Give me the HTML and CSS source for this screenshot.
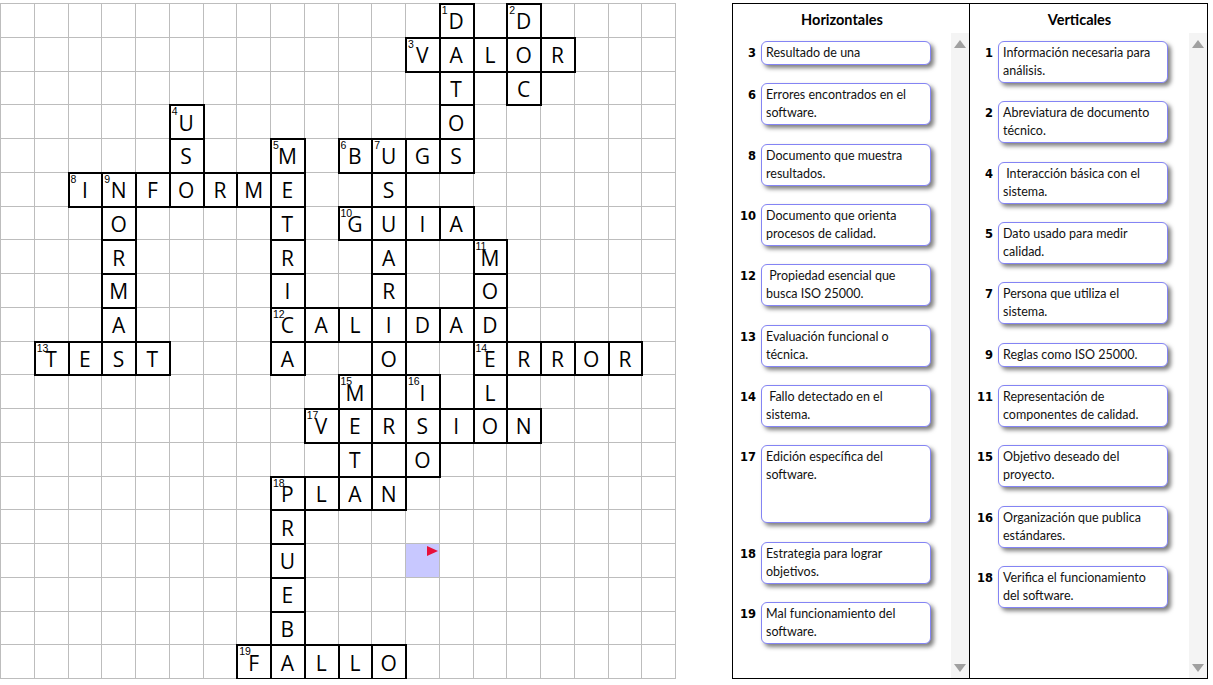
FILE: index.html
```html
<!DOCTYPE html>
<html lang="es">
<head>
<meta charset="utf-8">
<title>Crucigrama</title>
<link rel="stylesheet" href="styles.css">
</head>
<body>
<div class="page">
  <div class="cw">
    <i></i><i></i><i></i><i></i><i></i><i></i><i></i><i></i><i></i><i></i><i></i><i></i><i></i><b><sup>1</sup>D</b><i></i><b><sup>2</sup>D</b><i></i><i></i><i></i><i></i>
    <i></i><i></i><i></i><i></i><i></i><i></i><i></i><i></i><i></i><i></i><i></i><i></i><b><sup>3</sup>V</b><b>A</b><b>L</b><b>O</b><b>R</b><i></i><i></i><i></i>
    <i></i><i></i><i></i><i></i><i></i><i></i><i></i><i></i><i></i><i></i><i></i><i></i><i></i><b>T</b><i></i><b>C</b><i></i><i></i><i></i><i></i>
    <i></i><i></i><i></i><i></i><i></i><b><sup>4</sup>U</b><i></i><i></i><i></i><i></i><i></i><i></i><i></i><b>O</b><i></i><i></i><i></i><i></i><i></i><i></i>
    <i></i><i></i><i></i><i></i><i></i><b>S</b><i></i><i></i><b><sup>5</sup>M</b><i></i><b><sup>6</sup>B</b><b><sup>7</sup>U</b><b>G</b><b>S</b><i></i><i></i><i></i><i></i><i></i><i></i>
    <i></i><i></i><b><sup>8</sup>I</b><b><sup>9</sup>N</b><b>F</b><b>O</b><b>R</b><b>M</b><b>E</b><i></i><i></i><b>S</b><i></i><i></i><i></i><i></i><i></i><i></i><i></i><i></i>
    <i></i><i></i><i></i><b>O</b><i></i><i></i><i></i><i></i><b>T</b><i></i><b><sup>10</sup>G</b><b>U</b><b>I</b><b>A</b><i></i><i></i><i></i><i></i><i></i><i></i>
    <i></i><i></i><i></i><b>R</b><i></i><i></i><i></i><i></i><b>R</b><i></i><i></i><b>A</b><i></i><i></i><b><sup>11</sup>M</b><i></i><i></i><i></i><i></i><i></i>
    <i></i><i></i><i></i><b>M</b><i></i><i></i><i></i><i></i><b>I</b><i></i><i></i><b>R</b><i></i><i></i><b>O</b><i></i><i></i><i></i><i></i><i></i>
    <i></i><i></i><i></i><b>A</b><i></i><i></i><i></i><i></i><b><sup>12</sup>C</b><b>A</b><b>L</b><b>I</b><b>D</b><b>A</b><b>D</b><i></i><i></i><i></i><i></i><i></i>
    <i></i><b><sup>13</sup>T</b><b>E</b><b>S</b><b>T</b><i></i><i></i><i></i><b>A</b><i></i><i></i><b>O</b><i></i><i></i><b><sup>14</sup>E</b><b>R</b><b>R</b><b>O</b><b>R</b><i></i>
    <i></i><i></i><i></i><i></i><i></i><i></i><i></i><i></i><i></i><i></i><b><sup>15</sup>M</b><i></i><b><sup>16</sup>I</b><i></i><b>L</b><i></i><i></i><i></i><i></i><i></i>
    <i></i><i></i><i></i><i></i><i></i><i></i><i></i><i></i><i></i><b><sup>17</sup>V</b><b>E</b><b>R</b><b>S</b><b>I</b><b>O</b><b>N</b><i></i><i></i><i></i><i></i>
    <i></i><i></i><i></i><i></i><i></i><i></i><i></i><i></i><i></i><i></i><b>T</b><i></i><b>O</b><i></i><i></i><i></i><i></i><i></i><i></i><i></i>
    <i></i><i></i><i></i><i></i><i></i><i></i><i></i><i></i><b><sup>18</sup>P</b><b>L</b><b>A</b><b>N</b><i></i><i></i><i></i><i></i><i></i><i></i><i></i><i></i>
    <i></i><i></i><i></i><i></i><i></i><i></i><i></i><i></i><b>R</b><i></i><i></i><i></i><i></i><i></i><i></i><i></i><i></i><i></i><i></i><i></i>
    <i></i><i></i><i></i><i></i><i></i><i></i><i></i><i></i><b>U</b><i></i><i></i><i></i><i class="cur"></i><i></i><i></i><i></i><i></i><i></i><i></i><i></i>
    <i></i><i></i><i></i><i></i><i></i><i></i><i></i><i></i><b>E</b><i></i><i></i><i></i><i></i><i></i><i></i><i></i><i></i><i></i><i></i><i></i>
    <i></i><i></i><i></i><i></i><i></i><i></i><i></i><i></i><b>B</b><i></i><i></i><i></i><i></i><i></i><i></i><i></i><i></i><i></i><i></i><i></i>
    <i></i><i></i><i></i><i></i><i></i><i></i><i></i><b><sup>19</sup>F</b><b>A</b><b>L</b><b>L</b><b>O</b><i></i><i></i><i></i><i></i><i></i><i></i><i></i><i></i>
  </div>

  <div class="panel">
    <section class="col col-h">
      <h2 class="head">Horizontales</h2>
      <div class="body">
        <ul class="list">
          <li class="clue"><span class="num">3</span><div class="card">Resultado de una</div></li>
          <li class="clue"><span class="num">6</span><div class="card">Errores encontrados en el<br>software.</div></li>
          <li class="clue"><span class="num">8</span><div class="card">Documento que muestra<br>resultados.</div></li>
          <li class="clue"><span class="num">10</span><div class="card">Documento que orienta<br>procesos de calidad.</div></li>
          <li class="clue"><span class="num">12</span><div class="card">&nbsp;Propiedad esencial que<br>busca ISO 25000.</div></li>
          <li class="clue"><span class="num">13</span><div class="card">Evaluación funcional o<br>técnica.</div></li>
          <li class="clue"><span class="num">14</span><div class="card">&nbsp;Fallo detectado en el<br>sistema.</div></li>
          <li class="clue"><span class="num">17</span><div class="card tall">Edición específica del<br>software.</div></li>
          <li class="clue"><span class="num">18</span><div class="card">Estrategia para lograr<br>objetivos.</div></li>
          <li class="clue"><span class="num">19</span><div class="card">Mal funcionamiento del<br>software.</div></li>
        </ul>
        <div class="scroll"><span class="arr up"></span><span class="arr dn"></span></div>
      </div>
    </section>
    <section class="col col-v">
      <h2 class="head">Verticales</h2>
      <div class="body">
        <ul class="list">
          <li class="clue"><span class="num">1</span><div class="card">Información necesaria para<br>análisis.</div></li>
          <li class="clue"><span class="num">2</span><div class="card">Abreviatura de documento<br>técnico.</div></li>
          <li class="clue"><span class="num">4</span><div class="card">&nbsp;Interacción básica con el<br>sistema.</div></li>
          <li class="clue"><span class="num">5</span><div class="card">Dato usado para medir<br>calidad.</div></li>
          <li class="clue"><span class="num">7</span><div class="card">Persona que utiliza el<br>sistema.</div></li>
          <li class="clue"><span class="num">9</span><div class="card">Reglas como ISO 25000.</div></li>
          <li class="clue"><span class="num">11</span><div class="card">Representación de<br>componentes de calidad.</div></li>
          <li class="clue"><span class="num">15</span><div class="card">Objetivo deseado del<br>proyecto.</div></li>
          <li class="clue"><span class="num">16</span><div class="card">Organización que publica<br>estándares.</div></li>
          <li class="clue"><span class="num">18</span><div class="card">Verifica el funcionamiento<br>del software.</div></li>
        </ul>
        <div class="scroll"><span class="arr up"></span><span class="arr dn"></span></div>
      </div>
    </section>
  </div>
</div>
</body>
</html>
```

FILE: styles.css
```css
* { box-sizing: border-box; }

body {
  margin: 0;
  background: #fff;
  font-family: "Lato", "Liberation Sans", sans-serif;
  color: #000;
}

.page {
  display: flex;
  align-items: flex-start;
  padding-top: 3px;
}

/* ---------- crossword grid ---------- */
.cw {
  flex: none;
  display: grid;
  grid-template-columns: repeat(20, 33.75px);
  grid-auto-rows: 33.75px;
  border-top: 1px solid #bdbdbd;
  border-left: 1px solid #bdbdbd;
}

.cw i,
.cw b {
  display: block;
  border-right: 1px solid #bdbdbd;
  border-bottom: 1px solid #bdbdbd;
}

.cw b {
  position: relative;
  display: flex;
  align-items: center;
  justify-content: center;
  padding-top: 2px;
  font: 400 21px "Open Sans", "DejaVu Sans", sans-serif;
  color: #000;
  background: #fff;
  outline: 2px solid #000;
  outline-offset: -1px;
}

.cw sup {
  position: absolute;
  top: 1px;
  left: 2px;
  font: 400 10.5px/1 "Liberation Sans", sans-serif;
  color: #000;
}

.cw .cur {
  position: relative;
  background: #c8c8ff;
}

.cw .cur::after {
  content: "";
  position: absolute;
  top: 2px;
  right: 1px;
  border-left: 11px solid #e8103a;
  border-top: 5.5px solid transparent;
  border-bottom: 5.5px solid transparent;
}

/* ---------- clue panel ---------- */
.panel {
  flex: none;
  margin-left: 56px;
  width: 476px;
  height: 676px;
  border: 1px solid #000;
  display: flex;
  background: #fff;
}

.col {
  display: flex;
  flex-direction: column;
  min-width: 0;
}

.col-h { width: 236px; }

.col-v {
  flex: 1;
  border-left: 1px solid #000;
}

.head {
  margin: 0;
  height: 29px;
  padding: 2px 18px 0 0;
  display: flex;
  align-items: center;
  justify-content: center;
  font: 700 14.5px "Lato", sans-serif;
  color: #000;
}

.body {
  flex: 1;
  display: flex;
  min-height: 0;
}

.list {
  flex: 1;
  margin: 0;
  padding: 8px 0 0 5px;
  list-style: none;
}

.clue {
  display: flex;
  align-items: baseline;
  gap: 5px;
  margin-bottom: 18.33px;
}

.num {
  flex: none;
  width: 18px;
  text-align: right;
  font: 700 11.5px "DejaVu Sans", sans-serif;
  color: #000;
}

.card {
  width: 170px;
  min-height: 24px;
  padding: 2px 4px;
  border: 1px solid #8484f4;
  border-radius: 6px;
  background: #fff;
  box-shadow: 3px 3px 4px rgba(0, 0, 0, 0.5);
  font-size: 12.5px;
  line-height: 18px;
  color: #111;
  white-space: nowrap;
}

.card.tall { height: 78px; }

.scroll {
  flex: none;
  width: 18px;
  background: #f4f4f4;
  display: flex;
  flex-direction: column;
  justify-content: space-between;
  align-items: center;
  padding: 7px 0 6px;
}

.arr {
  width: 0;
  height: 0;
  border-left: 6.5px solid transparent;
  border-right: 6.5px solid transparent;
}

.arr.up { border-bottom: 8px solid #a0a0a0; }
.arr.dn { border-top: 8px solid #a0a0a0; }
```
